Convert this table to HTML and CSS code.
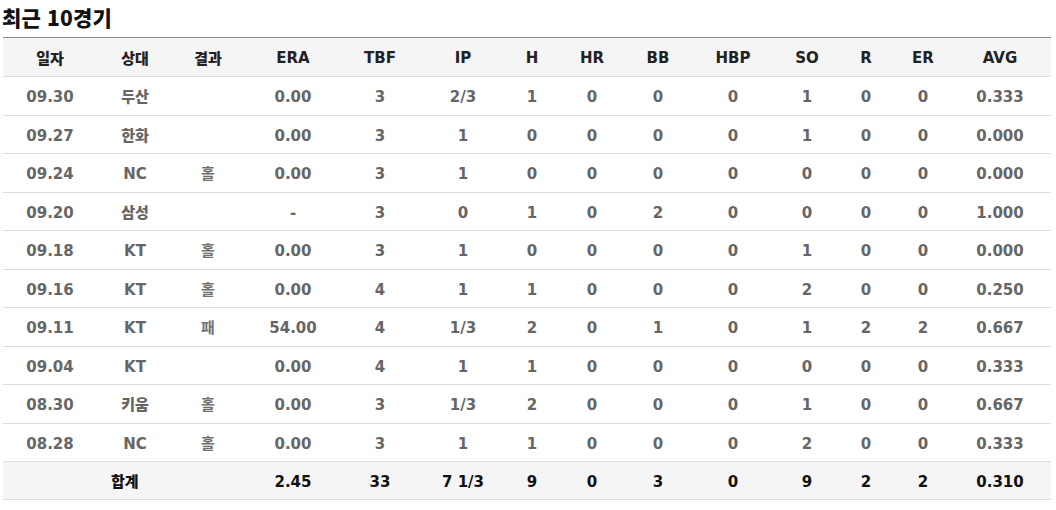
FILE: index.html
```html
<!DOCTYPE html>
<html lang="ko">
<head>
<meta charset="utf-8">
<link rel="stylesheet" href="styles.css">
</head>
<body>
<div class="wrap">
  <h2 class="title">최근 10경기</h2>
  <table class="stats">
    <colgroup>
      <col class="c1"><col class="c2"><col class="c3"><col class="c4"><col class="c5"><col class="c6"><col class="c7"><col class="c8"><col class="c9"><col class="c10"><col class="c11"><col class="c12"><col class="c13"><col class="c14">
    </colgroup>
    <thead>
      <tr><th class="ko">일자</th><th class="ko">상대</th><th class="ko">결과</th><th>ERA</th><th>TBF</th><th>IP</th><th>H</th><th>HR</th><th>BB</th><th>HBP</th><th>SO</th><th>R</th><th>ER</th><th>AVG</th></tr>
    </thead>
    <tbody>
      <tr><td>09.30</td><td class="ko">두산</td><td class="ko res"></td><td>0.00</td><td>3</td><td>2/3</td><td>1</td><td>0</td><td>0</td><td>0</td><td>1</td><td>0</td><td>0</td><td>0.333</td></tr>
      <tr><td>09.27</td><td class="ko">한화</td><td class="ko res"></td><td>0.00</td><td>3</td><td>1</td><td>0</td><td>0</td><td>0</td><td>0</td><td>1</td><td>0</td><td>0</td><td>0.000</td></tr>
      <tr><td>09.24</td><td>NC</td><td class="ko res">홀</td><td>0.00</td><td>3</td><td>1</td><td>0</td><td>0</td><td>0</td><td>0</td><td>0</td><td>0</td><td>0</td><td>0.000</td></tr>
      <tr><td>09.20</td><td class="ko">삼성</td><td class="ko res"></td><td>-</td><td>3</td><td>0</td><td>1</td><td>0</td><td>2</td><td>0</td><td>0</td><td>0</td><td>0</td><td>1.000</td></tr>
      <tr><td>09.18</td><td>KT</td><td class="ko res">홀</td><td>0.00</td><td>3</td><td>1</td><td>0</td><td>0</td><td>0</td><td>0</td><td>1</td><td>0</td><td>0</td><td>0.000</td></tr>
      <tr><td>09.16</td><td>KT</td><td class="ko res">홀</td><td>0.00</td><td>4</td><td>1</td><td>1</td><td>0</td><td>0</td><td>0</td><td>2</td><td>0</td><td>0</td><td>0.250</td></tr>
      <tr><td>09.11</td><td>KT</td><td class="ko res">패</td><td>54.00</td><td>4</td><td>1/3</td><td>2</td><td>0</td><td>1</td><td>0</td><td>1</td><td>2</td><td>2</td><td>0.667</td></tr>
      <tr><td>09.04</td><td>KT</td><td class="ko res"></td><td>0.00</td><td>4</td><td>1</td><td>1</td><td>0</td><td>0</td><td>0</td><td>0</td><td>0</td><td>0</td><td>0.333</td></tr>
      <tr><td>08.30</td><td class="ko">키움</td><td class="ko res">홀</td><td>0.00</td><td>3</td><td>1/3</td><td>2</td><td>0</td><td>0</td><td>0</td><td>1</td><td>0</td><td>0</td><td>0.667</td></tr>
      <tr><td>08.28</td><td>NC</td><td class="ko res">홀</td><td>0.00</td><td>3</td><td>1</td><td>1</td><td>0</td><td>0</td><td>0</td><td>2</td><td>0</td><td>0</td><td>0.333</td></tr>
    </tbody>
    <tfoot>
      <tr><td colspan="3" class="ko total-label">합계</td><td>2.45</td><td>33</td><td>7 1/3</td><td>9</td><td>0</td><td>3</td><td>0</td><td>9</td><td>2</td><td>2</td><td>0.310</td></tr>
    </tfoot>
  </table>
</div>
</body>
</html>
```

FILE: styles.css
```css
* { box-sizing: border-box; }
html, body { margin: 0; padding: 0; background: #fff; }
body {
  font-family: "DejaVu Sans", "Noto Sans CJK KR", sans-serif;
}
.wrap {
  width: 1056px;
  padding: 0 5px 0 3px;
}
.title {
  margin: 0 0 0 -1px;
  height: 37px;
  line-height: 34px;
  font-family: "Noto Sans CJK KR", sans-serif;
  font-weight: 900;
  font-size: 21px;
  color: #111;
  letter-spacing: 0.2px;
}
.stats {
  width: 1048px;
  border-collapse: collapse;
  table-layout: fixed;
  border-top: 1px solid #8a8a8a;
}
.c1 { width: 94px; }
.c2 { width: 76px; }
.c3 { width: 70px; }
.c4 { width: 100px; }
.c5 { width: 74px; }
.c6 { width: 92px; }
.c7 { width: 46px; }
.c8 { width: 74px; }
.c9 { width: 58px; }
.c10 { width: 92px; }
.c11 { width: 56px; }
.c12 { width: 62px; }
.c13 { width: 52px; }
.c14 { width: 102px; }
.stats th, .stats td {
  text-align: center;
  padding: 3px 0 0;
  font-weight: 700;
  font-size: 15px;
  border-bottom: 1px solid #dedede;
}
.stats th {
  height: 39px;
  background: #f5f5f5;
  color: #222;
  padding-top: 2px;
}
.stats .ko {
  font-family: "Noto Sans CJK KR", sans-serif;
  font-weight: 900;
  font-size: 15px;
  padding-top: 0;
}
.stats tbody td {
  height: 38.5px;
  color: #666;
}
.stats td.res {
  font-weight: 700;
  color: #707070;
}
.stats tfoot td {
  height: 38px;
  background: #f5f5f5;
  color: #111;
}
.stats tfoot .total-label {
  text-align: left;
  padding-left: 108px;
}
```
